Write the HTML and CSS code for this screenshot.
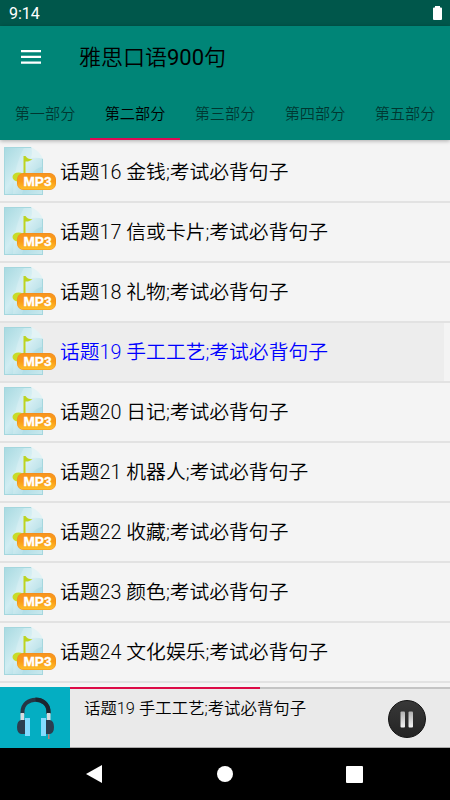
FILE: index.html
```html
<!DOCTYPE html>
<html lang="zh-CN">

<head>
   <meta charset="UTF-8">
   <meta name="viewport" content="width=device-width, initial-scale=1.0">
   <title>雅思口语900句</title>
   <link rel="stylesheet" href="styles.css">
</head>

<body>
   <!-- Shared icon for the list rows -->
   <svg class="defs" width="0" height="0">
      <defs>
         <linearGradient id="sheet" x1="0" y1="0" x2="1" y2="1">
            <stop offset="0" stop-color="#a9dae1"/>
            <stop offset="0.45" stop-color="#d0edf2"/>
            <stop offset="0.7" stop-color="#b0dde6"/>
            <stop offset="1" stop-color="#c9e9ee"/>
         </linearGradient>
         <linearGradient id="badge" x1="0" y1="0" x2="0" y2="1">
            <stop offset="0" stop-color="#f79420"/>
            <stop offset="0.5" stop-color="#fa9c18"/>
            <stop offset="1" stop-color="#ffc02a"/>
         </linearGradient>
         <symbol id="mp3" viewBox="0 0 54 50">
            <path d="M0 0H27L39 12V48H0Z" fill="#a5d7de"/>
            <path d="M1 1H27L38 12V47H1Z" fill="url(#sheet)"/>
            <path d="M20 1H27L38 12V20Q25 22 18 47H9Q10 18 20 1Z" fill="#ffffff" opacity="0.18"/>
            <path d="M27 0Q29 6 27 11Q34 10 39 12Q36 4 27 0Z" fill="#e3f3f5"/>
            <path d="M19.500 9H21.500Q23 12 28.500 12.500L24 14.500H21.500V29H19.500Z" fill="#bdd420"/>
            <ellipse cx="14.500" cy="30" rx="6" ry="4.500" fill="#c8dc28"/>
            <rect x="13" y="26" width="39" height="17" rx="6.500" fill="#ee8a1c"/>
            <rect x="13.500" y="26.500" width="38" height="16" rx="6" fill="url(#badge)"/>
            <text x="19.500" y="38.700" class="mp3-label" textLength="28" lengthAdjust="spacingAndGlyphs">MP3</text>
         </symbol>
      </defs>
   </svg>

   <div class="status-bar">
      <span>9:14</span>
      <svg class="battery" width="9" height="15" viewBox="0 0 9 15">
         <path d="M2 1.500V0H7V1.500H8Q9 1.500 9 2.500V13Q9 14 8 14H1Q0 14 0 13V2.500Q0 1.500 1 1.500Z" fill="#fff"/>
      </svg>
   </div>

   <header class="app-header">
      <div class="toolbar">
         <svg class="menu-icon" width="20" height="14" viewBox="0 0 20 14">
            <path d="M0 0H20V2.300H0ZM0 5.700H20V8H0ZM0 11.400H20V13.700H0Z" fill="#fff"/>
         </svg>
         <h1>雅思口语900句</h1>
      </div>
      <nav class="tabs">
         <a class="tab">第一部分</a>
         <a class="tab active">第二部分</a>
         <a class="tab">第三部分</a>
         <a class="tab">第四部分</a>
         <a class="tab">第五部分</a>
      </nav>
   </header>

   <ul class="topics">
      <li class="topic"><svg class="file-icon"><use href="#mp3"/></svg><span>话题16 金钱;考试必背句子</span></li>
      <li class="topic"><svg class="file-icon"><use href="#mp3"/></svg><span>话题17 信或卡片;考试必背句子</span></li>
      <li class="topic"><svg class="file-icon"><use href="#mp3"/></svg><span>话题18 礼物;考试必背句子</span></li>
      <li class="topic playing"><svg class="file-icon"><use href="#mp3"/></svg><span>话题19 手工工艺;考试必背句子</span></li>
      <li class="topic"><svg class="file-icon"><use href="#mp3"/></svg><span>话题20 日记;考试必背句子</span></li>
      <li class="topic"><svg class="file-icon"><use href="#mp3"/></svg><span>话题21 机器人;考试必背句子</span></li>
      <li class="topic"><svg class="file-icon"><use href="#mp3"/></svg><span>话题22 收藏;考试必背句子</span></li>
      <li class="topic"><svg class="file-icon"><use href="#mp3"/></svg><span>话题23 颜色;考试必背句子</span></li>
      <li class="topic"><svg class="file-icon"><use href="#mp3"/></svg><span>话题24 文化娱乐;考试必背句子</span></li>
   </ul>

   <!-- Bottom player -->
   <div class="player">
      <div class="cover">
         <svg width="38" height="44" viewBox="0 0 38 44">
            <path d="M5.500 17V15C5.500 -1.500 31.500 -1.500 31.500 15V17" fill="none" stroke="#263645" stroke-width="4"/>
            <path d="M18.500 2.600C25 2.600 31.500 6.500 31.500 15V17" fill="none" stroke="#1b2631" stroke-width="4"/>
            <path d="M3.500 16H7.200V24H3.500ZM29.800 16H33.500V24H29.800Z" fill="#d5dbe0"/>
            <path d="M8 23H4Q0 24 0 30Q0 36 4 37H8ZM29 23H33Q37 24 37 30Q37 36 33 37H29Z" fill="#2b3e50"/>
            <path d="M8 21H13V39H8ZM24 21H29V39H24Z" fill="#84dbff"/>
            <path d="M31 37H32.500V42H31Z" fill="#bd8179"/>
         </svg>
      </div>
      <div class="now-playing">
         <div class="progress"><div class="progress-value" style="width: 50%"></div></div>
         <div class="controls">
            <span class="track">话题19 手工工艺;考试必背句子</span>
            <button class="pause" aria-label="暂停">
               <svg width="14" height="17" viewBox="0 0 14 17">
                  <defs>
                     <linearGradient id="bars" x1="0" y1="0" x2="0" y2="1">
                        <stop offset="0" stop-color="#b0b0b0"/>
                        <stop offset="1" stop-color="#f4f4f4"/>
                     </linearGradient>
                  </defs>
                  <rect x="0.500" y="0.500" width="4.500" height="16" rx="1" fill="url(#bars)"/>
                  <rect x="8.500" y="0.500" width="4.500" height="16" rx="1" fill="url(#bars)"/>
               </svg>
            </button>
         </div>
      </div>
   </div>

   <div class="nav-bar">
      <svg width="17" height="18" viewBox="0 0 17 18"><path d="M0 9L16 0V18Z" fill="#fff"/></svg>
      <svg width="16" height="16" viewBox="0 0 16 16"><circle cx="8" cy="8" r="8" fill="#fff"/></svg>
      <svg width="17" height="17" viewBox="0 0 17 17"><rect width="17" height="17" rx="1" fill="#fff"/></svg>
   </div>
</body>

</html>
```

FILE: styles.css
```css
/* General styling */
* {
   box-sizing: border-box;
}

body {
   margin: 0;
   height: 800px;
   display: flex;
   flex-direction: column;
   overflow: hidden;
   background-color: #f4f4f4;
   color: #000;
   font-family: Roboto, "Noto Sans CJK SC DemiLight", "Noto Sans CJK SC", sans-serif;
   font-weight: 300;
}

svg {
   display: block;
   flex: none;
}

.defs {
   position: absolute;
}

/* Status bar */
.status-bar {
   flex: none;
   height: 26px;
   padding: 1px 8px 0 9px;
   display: flex;
   align-items: center;
   justify-content: space-between;
   background-color: #00574b;
   color: #fff;
   font-size: 16px;
   font-weight: 400;
}

/* Header with toolbar and tabs */
.app-header {
   flex: none;
   height: 114px;
   background-color: #008577;
   box-shadow: 0 1px 4px rgba(0, 0, 0, 0.3);
   z-index: 1;
}

.toolbar {
   height: 62px;
   padding-left: 21px;
   display: flex;
   align-items: center;
   gap: 38px;
}

h1 {
   margin: 0;
   padding-bottom: 4px;
   font-size: 22px;
   font-weight: 400;
}

.tabs {
   display: flex;
   height: 52px;
}

.tab {
   flex: none;
   width: 90px;
   display: flex;
   align-items: center;
   justify-content: center;
   padding: 0 0 4px;
   font-size: 15.2px;
   color: rgba(0, 0, 0, 0.6);
   border-top: 2px solid transparent;
   border-bottom: 2px solid transparent;
}

.tab.active {
   color: #000;
   border-bottom-color: #dc0a55;
}

/* Topic list */
.topics {
   flex: 1;
   min-height: 0;
   margin: 0;
   padding: 3px 0 0;
   list-style: none;
   overflow: hidden;
}

.topic {
   height: 60px;
   display: flex;
   align-items: center;
   gap: 2px;
   padding-left: 4px;
   font-size: 19.8px;
   border-bottom: 2px solid #e2e2e2;
}

.topic span {
   padding-bottom: 4px;
}

.file-icon {
   width: 54px;
   height: 50px;
}

.mp3-label {
   font-family: "Liberation Sans", sans-serif;
   font-size: 13px;
   font-weight: bold;
   fill: #fff;
   stroke: #fff;
   stroke-width: 0.4px;
}

.playing {
   color: #0000ff;
   background: linear-gradient(#ededed, #ededed) 0 0 / 444px 100% no-repeat;
}

/* Player */
.player {
   flex: none;
   height: 61px;
   display: flex;
   background-color: #eaeaea;
}

.cover {
   width: 70px;
   padding: 2px 0 0 2px;
   display: flex;
   align-items: center;
   justify-content: center;
   background-color: #04aec2;
}

.now-playing {
   flex: 1;
   border-bottom: 1px solid #aaa;
}

.progress {
   height: 2px;
   background-color: #c4c4c4;
}

.progress-value {
   height: 100%;
   background-color: #dc0a45;
}

.controls {
   display: flex;
   justify-content: space-between;
   padding: 9px 24px 0 14px;
}

.track {
   font-size: 16.4px;
   line-height: 22px;
}

.pause {
   width: 38px;
   height: 38px;
   margin-top: 2px;
   padding: 0;
   display: flex;
   align-items: center;
   justify-content: center;
   border: 1px solid #111;
   border-radius: 50%;
   background: linear-gradient(#383838, #242424);
}

/* System navigation */
.nav-bar {
   flex: none;
   height: 52px;
   padding: 0 87px 0 86px;
   display: flex;
   align-items: center;
   justify-content: space-between;
   background-color: #000;
}
```
